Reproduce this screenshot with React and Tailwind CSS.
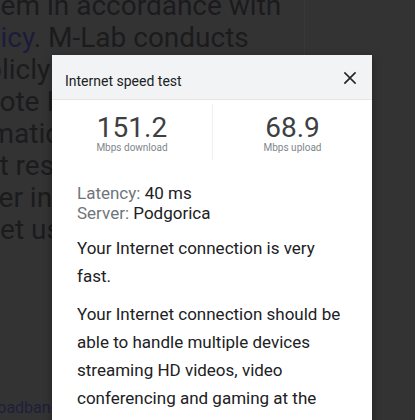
export default function App() {
  return (
    <div className="relative w-[415px] h-[420px] overflow-hidden bg-[#333333] font-['Roboto',sans-serif]">
      {/* dimmed page behind the dialog */}
      <div className="w-[305px] h-full border-r border-[#383838] text-[28px] leading-[32px] text-[#1b1b1d] whitespace-nowrap">
        <div className="-mt-[10px] -ml-[24px]">them in accordance with</div>
        <div className="-ml-[38px]">
          <span className="text-[#1c1c3a]">policy</span>. M-Lab conducts
        </div>
        <div className="-ml-[45px]">publicly available</div>
        <div className="-ml-[66px]">promote Internet</div>
        <div className="-ml-[68px]">information</div>
        <div className="-ml-[39px]">test results</div>
        <div className="-ml-[42px]">other information</div>
        <div className="-ml-[72px]">Internet user.</div>
        <div className="mt-[152px] -ml-[17px] text-[16px] leading-[20px] text-[#1e1e3c]">broadband</div>
      </div>

      {/* dialog */}
      <div className="absolute top-[55px] left-[52px] w-[320px] bg-white shadow-[0_2px_8px_rgba(0,0,0,0.35)]">
        <div className="h-[45px] pl-[13px] pr-[15px] pt-[9px] flex items-center justify-between bg-[#f1f3f4] border-b border-[#e2e4e6]">
          <span className="text-[14px] text-[#202124]">Internet speed test</span>
          <svg width="14" height="14" viewBox="0 0 14 14" className="-mt-[8px]">
            <path d="M2 2L12 12M12 2L2 12" stroke="#202124" strokeWidth="1.7" strokeLinecap="square" />
          </svg>
        </div>

        <div className="grid grid-cols-2 h-[60px]">
          <div className="flex flex-col items-center pt-[14px]">
            <span className="text-[28px] leading-[28px] text-[#3c4043]">151.2</span>
            <span className="text-[10px] leading-[12px] text-[#80868b]">Mbps download</span>
          </div>
          <div className="flex flex-col items-center pt-[10px] mt-[4px] border-l border-[#f0f0f0]">
            <span className="text-[28px] leading-[28px] text-[#3c4043]">68.9</span>
            <span className="text-[10px] leading-[12px] text-[#80868b]">Mbps upload</span>
          </div>
        </div>

        <div className="px-[25px] pt-[23px]">
          <div className="text-[17px] leading-[20px] text-[#202124]">
            <div>
              <span className="text-[#70757a]">Latency:</span> 40 ms
            </div>
            <div>
              <span className="text-[#70757a]">Server:</span> Podgorica
            </div>
          </div>
          <p className="mt-[11px] text-[17px] leading-[28px] text-[#202124]">
            Your Internet connection is very fast.
          </p>
          <p className="mt-[10px] text-[17px] leading-[28px] text-[#202124]">
            Your Internet connection should be able to handle multiple devices streaming HD videos, video
            conferencing and gaming at the same time.
          </p>
        </div>
      </div>
    </div>
  );
}
